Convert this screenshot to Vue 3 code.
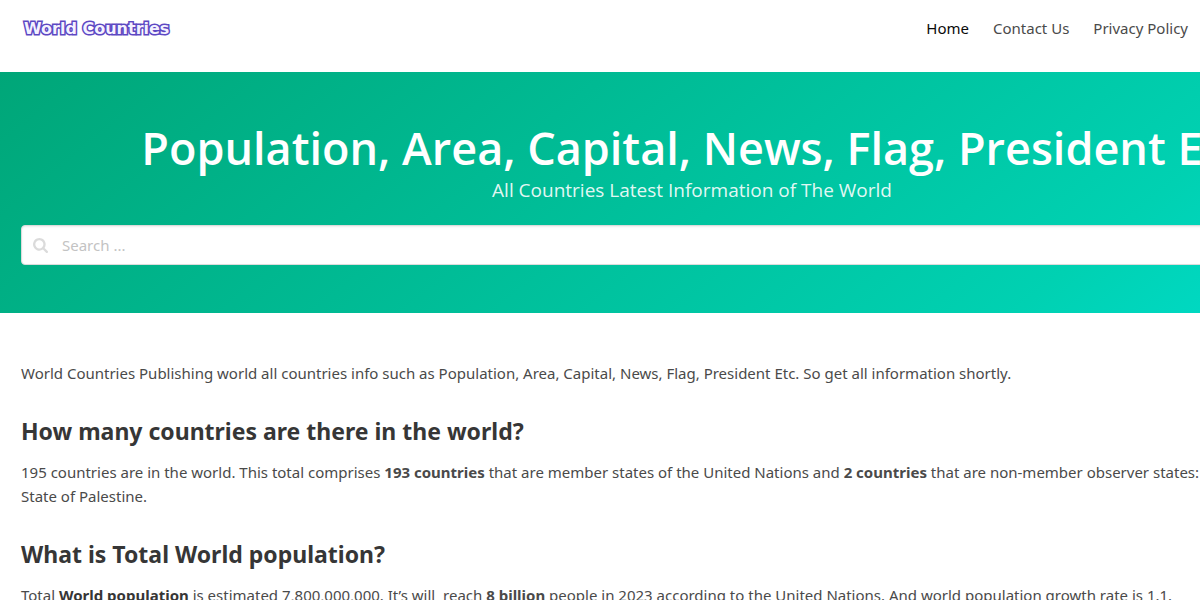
<script setup>
import { ref } from 'vue'

const links = [
  { label: 'Home', href: '#home', active: true },
  { label: 'Contact Us', href: '#contact', active: false },
  { label: 'Privacy Policy', href: '#privacy', active: false },
]
const query = ref('')
</script>

<template>
  <div class="site">
    <header class="navbar">
      <a class="brand" href="#home">World Countries</a>
      <nav class="menu" aria-label="Main">
        <a
          v-for="link in links"
          :key="link.href"
          class="menu-link"
          :class="{ active: link.active }"
          :href="link.href"
        >{{ link.label }}</a>
      </nav>
    </header>

    <section class="hero">
      <h1>Population, Area, Capital, News, Flag, President Etc</h1>
      <p class="subtitle">All Countries Latest Information of The World</p>
      <form class="search" role="search" @submit.prevent>
        <label class="search-icon" for="search-box" aria-label="Search">
          <svg viewBox="0 0 1664 1664" width="15" height="15" aria-hidden="true">
            <path
              fill="currentColor"
              d="M1152 704q0-185-131.500-316.500T704 256 387.500 387.500 256 704t131.500 316.500T704 1152t316.500-131.500T1152 704zm512 832q0 52-38 90t-90 38q-54 0-90-38l-343-342q-179 124-399 124-143 0-273.500-55.500t-225-150-150-225T0 704t55.500-273.500 150-225 225-150T704 0t273.500 55.500 225 150 150 225T1408 704q0 220-124 399l343 343q37 37 37 90z"
            />
          </svg>
        </label>
        <input id="search-box" v-model="query" type="text" placeholder="Search ..." />
      </form>
    </section>

    <main class="content">
      <p>World Countries Publishing world all countries info such as Population, Area, Capital, News, Flag, President Etc. So get all information shortly.</p>
      <h2>How many countries are there in the world?</h2>
      <p>
        195 countries are in the world. This total comprises <strong>193 countries</strong> that are member states of the United Nations and <strong>2 countries</strong> that are non-member observer states:<br />
        State of Palestine.
      </p>
      <h2>What is Total World population?</h2>
      <p>
        Total <strong class="dark">World population</strong> is estimated 7,800,000,000. It’s will&nbsp; reach <strong>8 billion</strong> people in 2023 according to the United Nations. And world population growth rate is 1.1.
      </p>
    </main>
  </div>
</template>

<style>
body {
  margin: 0;
  background: #fff;
}
</style>

<style scoped>
.site {
  height: 100vh;
  overflow: hidden;
  font-family: "Segoe UI", "Noto Sans", "Open Sans", sans-serif;
  font-size: 15px;
  line-height: 24px;
  color: #4a4a4a;
}

.navbar {
  display: flex;
  justify-content: space-between;
  align-items: flex-start;
  box-sizing: border-box;
  min-height: 72px;
  padding: 16px 12px 0 24px;
}

.brand {
  font-family: Verdana, "DejaVu Sans", sans-serif;
  font-size: 16px;
  font-weight: 700;
  line-height: 26px;
  color: #f4f1ff;
  text-decoration: none;
  text-shadow: 0 0 1px #4b33b8;
  -webkit-text-stroke: 3px #5f4ac4;
  paint-order: stroke fill;
}

.menu {
  display: flex;
  gap: 24px;
}

.menu-link {
  color: #4a4a4a;
  text-decoration: none;
}

.menu-link.active {
  color: #0a0a0a;
}

.hero {
  box-sizing: border-box;
  min-width: 1384px;
  padding: 48px 21px;
  background: linear-gradient(141deg, #00a678 0%, #00d1b2 78%, #00dfd0 100%);
  color: #fff;
  text-align: center;
}

h1 {
  margin: 0;
  font-family: "Segoe UI", "Open Sans", sans-serif;
  font-size: 45px;
  font-weight: 600;
  line-height: 56px;
}

.subtitle {
  margin: 0;
  font-family: "Segoe UI", "Open Sans", sans-serif;
  font-size: 19px;
  line-height: 28px;
  color: rgba(255, 255, 255, 0.9);
}

.search {
  display: flex;
  align-items: center;
  box-sizing: border-box;
  height: 40px;
  margin-top: 21px;
  padding: 0 11px;
  gap: 14px;
  border: 1px solid #dbdbdb;
  border-radius: 4px;
  background: #fff;
  box-shadow: inset 0 1px 2px rgba(10, 10, 10, 0.08);
}

.search-icon {
  display: flex;
  color: #dbdbdb;
}

.search input {
  flex: 1;
  min-width: 0;
  padding: 0;
  border: 0;
  outline: 0;
  background: transparent;
  font: inherit;
  font-size: 15px;
  line-height: 24px;
  color: #363636;
}

.search input::placeholder {
  color: #c3c3c3;
  opacity: 1;
}

.content {
  box-sizing: border-box;
  min-width: 1384px;
  padding: 48px 21px;
}

.content p {
  margin: 0 0 24px;
}

h2 {
  margin: 0 0 15px;
  font-size: 23px;
  font-weight: 700;
  line-height: 28px;
  color: #363636;
}

.content p + h2 {
  margin-top: 32px;
}

strong {
  font-weight: 700;
}

.dark {
  color: #363636;
}
</style>
